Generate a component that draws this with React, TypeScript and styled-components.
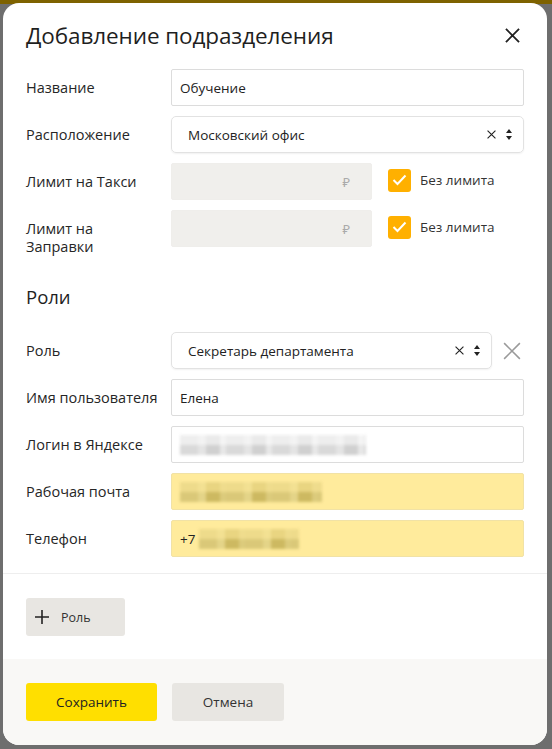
import React from "react";
import styled, { createGlobalStyle } from "styled-components";

const GlobalStyle = createGlobalStyle`
  html, body {
    margin: 0;
    padding: 0;
  }
  body {
    background: linear-gradient(#7e6200 0, #7e6200 4px, #6e6e6e 4px);
    min-height: 749px;
    font-family: "Open Sans", "Noto Sans", Arial, sans-serif;
    color: #222;
  }
`;

const Page = styled.div`
  padding: 3px 5px 4px 3px;
`;

const Modal = styled.div`
  width: 544px;
  height: 742px;
  background: #fff;
  border-radius: 16px;
  overflow: hidden;
  display: flex;
  flex-direction: column;
`;

const Header = styled.div`
  height: 64px;
  flex: none;
  display: flex;
  align-items: center;
  justify-content: space-between;
  padding: 0 27px 0 23px;
`;

const Title = styled.h1`
  margin: 0;
  font-size: 22.5px;
  font-weight: 400;
  color: #1f1f1f;
  letter-spacing: -0.1px;
`;

const IconButton = styled.button`
  border: none;
  background: none;
  padding: 0;
  display: flex;
  cursor: pointer;
`;

const Body = styled.div`
  padding: 2px 23px 16px;
  border-bottom: 1px solid #eeeeee;
`;

const Rows = styled.div`
  display: flex;
  flex-direction: column;
  gap: 10px;
`;

const Row = styled.div`
  display: grid;
  grid-template-columns: 145px 1fr;
  align-items: start;
  min-height: 37px;
`;

const Label = styled.div`
  padding-top: 10px;
  font-size: 14.5px;
  line-height: 18px;
  color: #262626;
`;

const Field = styled.div<{ $inset?: number }>`
  display: flex;
  align-items: center;
  gap: 11px;
  padding-right: ${(p) => p.$inset || 0}px;
`;

const Input = styled.div<{ $fill?: string; $disabled?: boolean; $width?: number }>`
  box-sizing: border-box;
  height: 37px;
  flex: ${(p) => (p.$width ? "none" : "1")};
  width: ${(p) => (p.$width ? `${p.$width}px` : "auto")};
  border: 1px solid ${(p) => (p.$fill ? "#f1e2a6" : p.$disabled ? "#efeeeb" : "#dcdcdc")};
  background: ${(p) => p.$fill || (p.$disabled ? "#f0efec" : "#fff")};
  border-radius: 2px;
  padding: 0 8px;
  display: flex;
  align-items: center;
  font-size: 13.5px;
  color: #222;
`;

const Select = styled.div`
  box-sizing: border-box;
  flex: 1;
  height: 37px;
  border: 1px solid #e2e2e2;
  border-radius: 5px;
  box-shadow: 0 1px 2px rgba(0, 0, 0, 0.06);
  padding: 0 11px 0 16px;
  display: flex;
  align-items: center;
  font-size: 13.5px;
  color: #222;
`;

const SelectValue = styled.span`
  flex: 1;
`;

const SelectIcons = styled.div`
  display: flex;
  align-items: center;
  gap: 10px;
`;

const Rub = styled.span`
  margin-left: auto;
  margin-right: 13px;
  color: #aaa;
  font-size: 13px;
`;

const Check = styled.label`
  display: flex;
  align-items: center;
  gap: 9px;
  margin-left: 5px;
  margin-top: -3px;
  font-size: 13.5px;
  color: #333;
`;

const Box = styled.span`
  width: 23px;
  height: 23px;
  border-radius: 3px;
  background: #ffb000;
  display: flex;
  align-items: center;
  justify-content: center;
`;

const SectionTitle = styled.h2`
  margin: 29px 0 23px;
  font-size: 18.5px;
  font-weight: 400;
  line-height: 24px;
  color: #1f1f1f;
`;

const Blur = styled.div<{ $w: number; $tone: "gray" | "yellow" }>`
  width: ${(p) => p.$w}px;
  height: 20px;
  display: flex;
  flex-direction: column;
  filter: blur(1.8px);
  span {
    display: block;
    height: 10px;
    background: ${(p) =>
      p.$tone === "gray"
        ? "repeating-linear-gradient(90deg, #d9d9d9 0 18px, #e4e4e4 18px 26px, #d0d0d0 26px 40px, #e8e8e8 40px 46px)"
        : "repeating-linear-gradient(90deg, #dac878 0 18px, #e4d488 18px 26px, #cdb961 26px 40px, #dccb7c 40px 46px)"};
  }
  span:first-child {
    opacity: 0.45;
  }
`;

const AddArea = styled.div`
  padding: 24px 23px 23px;
`;

const GrayButton = styled.button<{ $w: number }>`
  box-sizing: border-box;
  width: ${(p) => p.$w}px;
  height: 38px;
  border: none;
  border-radius: 3px;
  background: #e8e6e2;
  font-family: inherit;
  font-size: 13.5px;
  color: #333;
  display: flex;
  align-items: center;
  justify-content: center;
  gap: 12px;
  cursor: pointer;
`;

const AddButton = styled(GrayButton)`
  justify-content: flex-start;
  padding-left: 9px;
  font-size: 12.5px;
`;

const Footer = styled.div`
  flex: 1;
  background: #f9f8f6;
  padding: 24px 23px;
  display: flex;
  gap: 15px;
  align-items: flex-start;
`;

const PrimaryButton = styled(GrayButton)`
  background: #ffdf00;
  color: #222;
`;

const Cross = ({ size, color, width }: { size: number; color: string; width: number }) => (
  <svg width={size} height={size} viewBox="0 0 16 16">
    <path d="M1 1L15 15M15 1L1 15" stroke={color} strokeWidth={width} />
  </svg>
);

const Arrows = () => (
  <svg width="6" height="11" viewBox="0 0 6 11">
    <path d="M3 0L6 4H0Z M3 11L0 7H6Z" fill="#222" />
  </svg>
);

const Tick = () => (
  <svg width="15" height="12" viewBox="0 0 15 12">
    <path d="M1.5 6L5.5 10L13.5 1.5" stroke="#fff" strokeWidth="2" fill="none" />
  </svg>
);

const SelectControls = () => (
  <SelectIcons>
    <Cross size={9} color="#222" width={2} />
    <Arrows />
  </SelectIcons>
);

const Blurred = ({ w, tone }: { w: number; tone: "gray" | "yellow" }) => (
  <Blur $w={w} $tone={tone}>
    <span />
    <span />
  </Blur>
);

const LimitRow = ({ label }: { label: React.ReactNode }) => (
  <Row>
    <Label>{label}</Label>
    <Field>
      <Input $disabled $width={201}>
        <Rub>₽</Rub>
      </Input>
      <Check>
        <Box>
          <Tick />
        </Box>
        Без лимита
      </Check>
    </Field>
  </Row>
);

export default function App() {
  return (
    <>
      <GlobalStyle />
      <Page>
        <Modal>
          <Header>
            <Title>Добавление подразделения</Title>
            <IconButton>
              <Cross size={15} color="#222" width={2} />
            </IconButton>
          </Header>
          <Body>
            <Rows>
              <Row>
                <Label>Название</Label>
                <Field>
                  <Input>Обучение</Input>
                </Field>
              </Row>
              <Row>
                <Label>Расположение</Label>
                <Field>
                  <Select>
                    <SelectValue>Московский офис</SelectValue>
                    <SelectControls />
                  </Select>
                </Field>
              </Row>
              <LimitRow label="Лимит на Такси" />
              <LimitRow
                label={
                  <>
                    Лимит на
                    <br />
                    Заправки
                  </>
                }
              />
            </Rows>
            <SectionTitle>Роли</SectionTitle>
            <Rows>
              <Row>
                <Label>Роль</Label>
                <Field $inset={3}>
                  <Select>
                    <SelectValue>Секретарь департамента</SelectValue>
                    <SelectControls />
                  </Select>
                  <IconButton>
                    <Cross size={18} color="#9a9a9a" width={1.4} />
                  </IconButton>
                </Field>
              </Row>
              <Row>
                <Label>Имя пользователя</Label>
                <Field>
                  <Input>Елена</Input>
                </Field>
              </Row>
              <Row>
                <Label>Логин в Яндексе</Label>
                <Field>
                  <Input>
                    <Blurred w={186} tone="gray" />
                  </Input>
                </Field>
              </Row>
              <Row>
                <Label>Рабочая почта</Label>
                <Field>
                  <Input $fill="#ffeb9c">
                    <Blurred w={142} tone="yellow" />
                  </Input>
                </Field>
              </Row>
              <Row>
                <Label>Телефон</Label>
                <Field>
                  <Input $fill="#ffeb9c">
                    +7&nbsp;
                    <Blurred w={100} tone="yellow" />
                  </Input>
                </Field>
              </Row>
            </Rows>
          </Body>
          <AddArea>
            <AddButton $w={99}>
              <svg width="14" height="14" viewBox="0 0 14 14">
                <path d="M7 0V14M0 7H14" stroke="#222" strokeWidth="1.6" />
              </svg>
              Роль
            </AddButton>
          </AddArea>
          <Footer>
            <PrimaryButton $w={131}>Сохранить</PrimaryButton>
            <GrayButton $w={112}>Отмена</GrayButton>
          </Footer>
        </Modal>
      </Page>
    </>
  );
}
